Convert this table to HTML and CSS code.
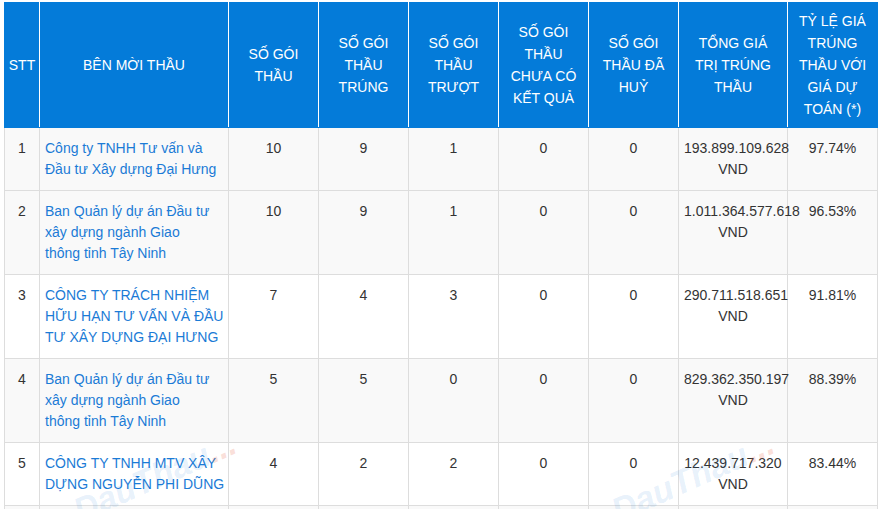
FILE: index.html
```html
<!DOCTYPE html>
<html lang="vi">
<head>
<meta charset="utf-8">
<title>Bên mời thầu</title>
<link rel="stylesheet" href="styles.css">
</head>
<body>
<div class="wrap">
  <table class="bid-table">
    <colgroup>
      <col class="c-stt"><col class="c-name"><col class="c-num"><col class="c-num"><col class="c-num"><col class="c-num"><col class="c-num"><col class="c-total"><col class="c-rate">
    </colgroup>
    <thead>
      <tr>
        <th class="th-stt">STT</th>
        <th>BÊN MỜI THẦU</th>
        <th>SỐ GÓI THẦU</th>
        <th>SỐ GÓI THẦU TRÚNG</th>
        <th>SỐ GÓI THẦU TRƯỢT</th>
        <th>SỐ GÓI THẦU CHƯA CÓ KẾT QUẢ</th>
        <th>SỐ GÓI THẦU ĐÃ HUỶ</th>
        <th>TỔNG GIÁ TRỊ TRÚNG THẦU</th>
        <th>TỶ LỆ GIÁ TRÚNG THẦU VỚI GIÁ DỰ TOÁN (*)</th>
      </tr>
    </thead>
    <tbody>
      <tr class="shade">
        <td class="ctr">1</td>
        <td class="name"><a href="#">Công ty TNHH Tư vấn và<br>Đầu tư Xây dựng Đại Hưng</a></td>
        <td class="ctr">10</td><td class="ctr">9</td><td class="ctr">1</td><td class="ctr">0</td><td class="ctr">0</td>
        <td class="ctr">193.899.109.628 VND</td>
        <td class="ctr">97.74%</td>
      </tr>
      <tr class="shade">
        <td class="ctr">2</td>
        <td class="name"><a href="#">Ban Quản lý dự án Đầu tư<br>xây dựng ngành Giao<br>thông tỉnh Tây Ninh</a></td>
        <td class="ctr">10</td><td class="ctr">9</td><td class="ctr">1</td><td class="ctr">0</td><td class="ctr">0</td>
        <td class="ctr">1.011.364.577.618 VND</td>
        <td class="ctr">96.53%</td>
      </tr>
      <tr>
        <td class="ctr">3</td>
        <td class="name"><a href="#">CÔNG TY TRÁCH NHIỆM<br>HỮU HẠN TƯ VẤN VÀ ĐẦU<br>TƯ XÂY DỰNG ĐẠI HƯNG</a></td>
        <td class="ctr">7</td><td class="ctr">4</td><td class="ctr">3</td><td class="ctr">0</td><td class="ctr">0</td>
        <td class="ctr">290.711.518.651 VND</td>
        <td class="ctr">91.81%</td>
      </tr>
      <tr class="shade">
        <td class="ctr">4</td>
        <td class="name"><a href="#">Ban Quản lý dự án Đầu tư<br>xây dựng ngành Giao<br>thông tỉnh Tây Ninh</a></td>
        <td class="ctr">5</td><td class="ctr">5</td><td class="ctr">0</td><td class="ctr">0</td><td class="ctr">0</td>
        <td class="ctr">829.362.350.197 VND</td>
        <td class="ctr">88.39%</td>
      </tr>
      <tr>
        <td class="ctr">5</td>
        <td class="name"><a href="#">CÔNG TY TNHH MTV XÂY<br>DỰNG NGUYỄN PHI DŨNG</a></td>
        <td class="ctr">4</td><td class="ctr">2</td><td class="ctr">2</td><td class="ctr">0</td><td class="ctr">0</td>
        <td class="ctr">12.439.717.320 VND</td>
        <td class="ctr">83.44%</td>
      </tr>
      <tr class="shade row-more">
        <td></td><td></td><td></td><td></td><td></td><td></td><td></td><td></td><td></td>
      </tr>
    </tbody>
  </table>
  <span class="wm wm-left">DauThau<span class="wm-dots">...</span></span>
  <span class="wm wm-right">DauThau<span class="wm-dots">...</span></span>
</div>
</body>
</html>
```
FILE: styles.css
```css
html, body {
  margin: 0;
  padding: 0;
  background: #fff;
  height: 509px;
  overflow: hidden;
}

body {
  font-family: "Liberation Sans", Arial, sans-serif;
  font-size: 14px;
  color: #333;
}

.wrap {
  position: relative;
  padding: 2px 0 0 4px;
}

.bid-table {
  width: 873px;
  table-layout: fixed;
  border-collapse: collapse;
}

.c-stt { width: 35px; }
.c-name { width: 189px; }
.c-num { width: 90px; }
.c-total { width: 109px; }
.c-rate { width: 90px; }

.bid-table th {
  background: #047bd9;
  color: #fff;
  font-weight: normal;
  text-align: center;
  vertical-align: middle;
  line-height: 22px;
  padding: 7px 8px 7px;
  border: 1px solid #fff;
  border-top-color: #047bd9;
  border-bottom-color: #047bd9;
}

.bid-table th:first-child {
  border-left-color: #047bd9;
}

.bid-table th:last-child {
  border-right-color: #047bd9;
}

.bid-table .th-stt {
  padding-left: 0;
  padding-right: 0;
}

.bid-table td {
  padding: 10px 5px;
  line-height: 21px;
  vertical-align: top;
  border: 1px solid #ddd;
  color: #333;
}

.bid-table tr.shade td {
  background: #f9f9f9;
}

.bid-table tr.row-more td {
  height: 42px;
}

.bid-table td.ctr {
  text-align: center;
}

.bid-table td.name {
  white-space: nowrap;
  overflow: visible;
}

.bid-table a {
  color: #1b7bd6;
  text-decoration: none;
}

.wm {
  position: absolute;
  top: 424px;
  transform-origin: 0 50%;
  transform: rotate(-24deg) translateX(-100%);
  font-family: "Liberation Sans", Arial, sans-serif;
  font-weight: bold;
  font-style: italic;
  font-size: 34px;
  line-height: 34px;
  color: rgba(27, 123, 214, 0.11);
  white-space: nowrap;
  pointer-events: none;
}

.wm-dots {
  color: rgba(230, 90, 60, 0.2);
}

.wm-left { left: 234px; }
.wm-right { left: 772px; }
```
